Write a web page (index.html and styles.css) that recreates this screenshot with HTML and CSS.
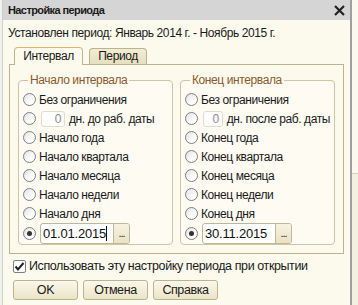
FILE: index.html
```html
<!DOCTYPE html>
<html lang="ru">
<head>
<meta charset="UTF-8" />
<title>Настройка периода</title>
<link rel="stylesheet" href="styles.css">
</head>
<body>
  <div class="screen">
    <div class="edge-left"></div>
    <div class="dialog">
      <div class="titlebar">
        <span class="title">Настройка периода</span>
        <svg class="close" width="11" height="11" viewBox="0 0 11 11"><path d="M1 1 L10 10 M10 1 L1 10" stroke="#222" stroke-width="2.2"/></svg>
      </div>
      <div class="body">
        <div class="info">Установлен период: Январь 2014 г. - Ноябрь 2015 г.</div>
        <div class="tabs">
          <div class="tab active">Интервал</div>
          <div class="tab">Период</div>
        </div>
        <div class="panel">
          <fieldset class="group">
            <legend>Начало интервала</legend>
            <div class="row"><span class="radio"></span>Без ограничения</div>
            <div class="row"><span class="radio"></span><span class="spin">0</span>дн. до раб. даты</div>
            <div class="row"><span class="radio"></span>Начало года</div>
            <div class="row"><span class="radio"></span>Начало квартала</div>
            <div class="row"><span class="radio"></span>Начало месяца</div>
            <div class="row"><span class="radio"></span>Начало недели</div>
            <div class="row"><span class="radio"></span>Начало дня</div>
            <div class="row date-row">
              <span class="radio checked"></span>
              <span class="date"><span class="date-value">01.01.2015<span class="caret"></span></span><span class="date-btn">...</span></span>
            </div>
          </fieldset>
          <fieldset class="group">
            <legend>Конец интервала</legend>
            <div class="row"><span class="radio"></span>Без ограничения</div>
            <div class="row"><span class="radio"></span><span class="spin">0</span>дн. после раб. даты</div>
            <div class="row"><span class="radio"></span>Конец года</div>
            <div class="row"><span class="radio"></span>Конец квартала</div>
            <div class="row"><span class="radio"></span>Конец месяца</div>
            <div class="row"><span class="radio"></span>Конец недели</div>
            <div class="row"><span class="radio"></span>Конец дня</div>
            <div class="row date-row">
              <span class="radio checked"></span>
              <span class="date"><span class="date-value">30.11.2015</span><span class="date-btn">...</span></span>
            </div>
          </fieldset>
        </div>
        <div class="check-row">
          <span class="checkbox"><svg width="11" height="11" viewBox="0 0 11 11"><path d="M1.5 5.5 L4 8.5 L9.5 2" fill="none" stroke="#222" stroke-width="2"/></svg></span>
          Использовать эту настройку периода при открытии
        </div>
        <div class="buttons">
          <button class="btn">OK</button>
          <button class="btn">Отмена</button>
          <button class="btn">Справка</button>
        </div>
      </div>
    </div>
    <div class="edge-right">
      <div class="edge-top"></div>
      <div class="edge-bottom"></div>
    </div>
  </div>
</body>
</html>
```

FILE: styles.css
```css
* {
  box-sizing: border-box;
}
body {
  margin: 0;
  font-family: "Liberation Sans", Arial, sans-serif;
  font-size: 12px;
  letter-spacing: -0.4px;
  color: #1a1a1a;
}

.screen {
  display: flex;
  width: 358px;
  height: 305px;
  overflow: hidden;
}

.edge-left {
  width: 3px;
  background: #f1f1ee;
  border-right: 1px solid #cfcfcf;
}

.dialog {
  width: 347px;
  display: flex;
  flex-direction: column;
  background: #fcfaed;
}

/* Title bar */
.titlebar {
  height: 20px;
  display: flex;
  align-items: center;
  justify-content: space-between;
  padding: 0 5px 0 5px;
  background: #d5d5d5;
}
.title {
  font-weight: bold;
  font-size: 11px;
  letter-spacing: -0.6px;
  color: #1a1a1a;
}

.body {
  flex: 1;
  padding: 5px 7px 0 5px;
}

.info {
  height: 16px;
  line-height: 16px;
}

/* Tabs */
.tabs {
  display: flex;
  gap: 6px;
  margin-top: 6px;
  padding-left: 6px;
  height: 17px;
  align-items: flex-end;
}
.tab {
  height: 16px;
  width: 58px;
  padding: 0;
  text-align: center;
  line-height: 15px;
  border: 1px solid #bab38f;
  border-bottom: none;
  border-radius: 4px 4px 0 0;
  background: linear-gradient(#f1ecd3, #e6dfbf);
}
.tab.active {
  width: 69px;
  height: 18px;
  line-height: 16px;
  background: #fcfaed;
  border-top-color: #e2b36a;
  margin-bottom: -1px;
  position: relative;
}

.panel {
  display: flex;
  gap: 7px;
  margin-left: 1px;
  width: 335px;
  height: 190px;
  padding: 9px 8px 8px 8px;
  border: 1px solid #bab38f;
  background: #fcfaed;
}

/* Group boxes */
.group {
  flex: 1;
  margin: 0;
  padding: 4px 4px 0 4px;
  border: 1px solid #cdc6a6;
  border-radius: 4px;
  background: #fdfbf2;
  min-width: 0;
}
.group legend {
  margin-left: 5px;
  padding: 0 2px;
  color: #8a5a2c;
  line-height: 12px;
}

.row {
  display: flex;
  align-items: center;
  height: 19px;
  white-space: nowrap;
}

.radio {
  width: 13px;
  height: 13px;
  margin-right: 3px;
  border: 1px solid #7f7f7f;
  border-radius: 50%;
  background: linear-gradient(135deg, #e2e2e2, #ffffff 70%);
  flex: none;
  position: relative;
}
.radio.checked::after {
  content: "";
  position: absolute;
  left: 3px;
  top: 3px;
  width: 5px;
  height: 5px;
  border-radius: 50%;
  background: #333;
}

.spin {
  width: 24px;
  height: 16px;
  margin-left: 2px;
  margin-right: 4px;
  padding-right: 3px;
  border: 1px solid #e0dccc;
  border-radius: 3px;
  background: #ffffff;
  color: #8a8a8a;
  text-align: right;
  line-height: 14px;
}

.date-row {
  height: 21px;
}
.date {
  display: flex;
  width: 90px;
  height: 21px;
  margin-left: 1px;
  border: 1px solid #bfb898;
  border-radius: 3px;
  background: #ffffff;
  overflow: hidden;
}
.date-value {
  flex: 1;
  padding-left: 2px;
  font-size: 13px;
  letter-spacing: -0.2px;
  line-height: 19px;
  color: #111;
  display: flex;
  align-items: center;
}
.caret {
  width: 1px;
  height: 15px;
  background: #111;
}
.date-btn {
  width: 16px;
  border-left: 1px solid #bfb898;
  background: linear-gradient(#f7f3e0, #e9e2c4);
  text-align: center;
  line-height: 18px;
  font-size: 11px;
  letter-spacing: -1px;
}

/* Checkbox */
.check-row {
  display: flex;
  align-items: center;
  height: 16px;
  margin-top: 4px;
  margin-left: 5px;
  font-size: 12.5px;
}
.checkbox {
  width: 13px;
  height: 13px;
  margin-right: 3px;
  border: 1px solid #7f7f7f;
  border-radius: 2px;
  background: #ffffff;
  display: flex;
  align-items: center;
  justify-content: center;
}

/* Buttons */
.buttons {
  display: flex;
  gap: 5px;
  margin-top: 6px;
  margin-left: 5px;
}
.btn {
  width: 65px;
  height: 20px;
  padding: 0;
  font-family: inherit;
  font-size: 12.5px;
  letter-spacing: -0.4px;
  color: #1a1a1a;
  border: 1px solid #bab38f;
  border-radius: 3px;
  background: linear-gradient(#fbf8ea, #ebe4c7);
}

.edge-right {
  flex: 1;
  display: flex;
  flex-direction: column;
  border-left: 2px solid #9f9f9f;
}
.edge-top {
  height: 174px;
  background: #fbf9ef;
  border-bottom: 1px solid #d6d0b6;
}
.edge-bottom {
  flex: 1;
  background: #f3efe1;
}
```
